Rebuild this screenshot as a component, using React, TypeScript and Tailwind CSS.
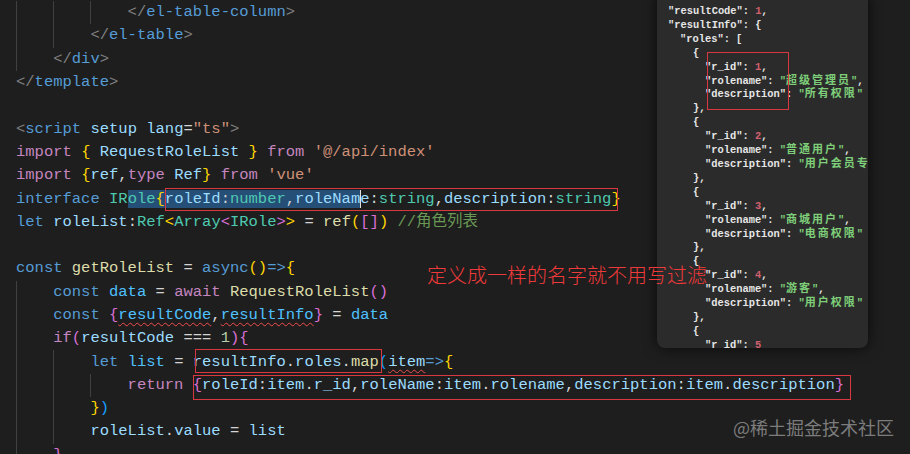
import React from "react";

const MONO = "font-['Liberation_Mono','Noto_Sans_CJK_SC',monospace]";

const C = {
  punct: "text-[#808080]",
  tag: "text-[#569cd6]",
  kw: "text-[#569cd6]",
  attr: "text-[#9cdcfe]",
  str: "text-[#ce9178]",
  ctrl: "text-[#c586c0]",
  v: "text-[#9cdcfe]",
  cv: "text-[#4fc1ff]",
  type: "text-[#4ec9b0]",
  fn: "text-[#dcdcaa]",
  num: "text-[#b5cea8]",
  cmt: "text-[#6a9955]",
  gold: "text-[#ffd700]",
  pur: "text-[#da70d6]",
  blue: "text-[#179fff]",
  def: "text-[#d4d4d4]",
};

const S = ({ c, children }: any) => <span className={c}>{children}</span>;

const Squig = ({ c, children }: any) => (
  <span
    className={
      c +
      " underline decoration-wavy decoration-[#f14c4c] decoration-1 underline-offset-[3px]"
    }
  >
    {children}
  </span>
);

const Box = ({ cls, children }: any) => (
  <span className="relative inline-block">
    {children}
    <span
      className={
        "pointer-events-none absolute border border-[#d8383f] " + cls
      }
    />
  </span>
);

function Line({ indent = 0, children }: any) {
  return (
    <div className="flex h-[23.3px] items-center whitespace-pre">
      {Array.from({ length: indent }).map((_, i) => (
        <span
          key={i}
          className="w-[4ch] shrink-0 self-stretch border-l border-[#404040]"
        />
      ))}
      <span className="leading-[17px]">{children}</span>
    </div>
  );
}

const Sel = ({ c, children }: any) => (
  <span className={c + " bg-[#264f78]"}>{children}</span>
);

function Code() {
  return (
    <div className={`pl-4 pt-[1px] text-[15.5px] ${MONO}`}>
      <Line indent={3}>
        <S c={C.punct}>{"</"}</S>
        <S c={C.tag}>el-table-column</S>
        <S c={C.punct}>{">"}</S>
      </Line>
      <Line indent={2}>
        <S c={C.punct}>{"</"}</S>
        <S c={C.tag}>el-table</S>
        <S c={C.punct}>{">"}</S>
      </Line>
      <Line indent={1}>
        <S c={C.punct}>{"</"}</S>
        <S c={C.tag}>div</S>
        <S c={C.punct}>{">"}</S>
      </Line>
      <Line>
        <S c={C.punct}>{"</"}</S>
        <S c={C.tag}>template</S>
        <S c={C.punct}>{">"}</S>
      </Line>
      <Line> </Line>
      <Line>
        <S c={C.punct}>{"<"}</S>
        <S c={C.tag}>script</S>
        <S c={C.attr}> setup lang</S>
        <S c={C.def}>=</S>
        <S c={C.str}>"ts"</S>
        <S c={C.punct}>{">"}</S>
      </Line>
      <Line>
        <S c={C.ctrl}>import </S>
        <S c={C.gold}>{"{"}</S>
        <S c={C.v}> RequestRoleList </S>
        <S c={C.gold}>{"}"}</S>
        <S c={C.ctrl}> from </S>
        <S c={C.str}>'@/api/index'</S>
      </Line>
      <Line>
        <S c={C.ctrl}>import </S>
        <S c={C.gold}>{"{"}</S>
        <S c={C.v}>ref</S>
        <S c={C.def}>,</S>
        <S c={C.ctrl}>type </S>
        <S c={C.v}>Ref</S>
        <S c={C.gold}>{"}"}</S>
        <S c={C.ctrl}> from </S>
        <S c={C.str}>'vue'</S>
      </Line>
      <Line>
        <S c={C.kw}>interface </S>
        <S c={C.type}>IR</S>
        <Sel c={C.type}>ole</Sel>
        <Sel c={C.gold}>{"{"}</Sel>
        <Box cls="left-0 right-[-7px] top-[-3px] bottom-[-3px]">
          <Sel c={C.v}>roleId</Sel>
          <Sel c={C.def}>:</Sel>
          <Sel c={C.type}>number</Sel>
          <Sel c={C.def}>,</Sel>
          <Sel c={C.v}>roleNam</Sel>
          <span className={C.v + " shadow-[inset_1px_0_0_#e0e0e0]"}>e</span>
          <S c={C.def}>:</S>
          <S c={C.type}>string</S>
          <S c={C.def}>,</S>
          <S c={C.v}>description</S>
          <S c={C.def}>:</S>
          <S c={C.type}>string</S>
        </Box>
        <S c={C.gold}>{"}"}</S>
      </Line>
      <Line>
        <S c={C.kw}>let </S>
        <S c={C.v}>roleList</S>
        <S c={C.def}>:</S>
        <S c={C.type}>Ref</S>
        <S c={C.gold}>{"<"}</S>
        <S c={C.type}>Array</S>
        <S c={C.pur}>{"<"}</S>
        <S c={C.type}>IRole</S>
        <S c={C.pur}>{">"}</S>
        <S c={C.gold}>{">"}</S>
        <S c={C.def}> = </S>
        <S c={C.fn}>ref</S>
        <S c={C.gold}>(</S>
        <S c={C.pur}>[]</S>
        <S c={C.gold}>)</S>
        <S c={C.cmt}> //角色列表</S>
      </Line>
      <Line> </Line>
      <Line>
        <S c={C.kw}>const </S>
        <S c={C.fn}>getRoleList</S>
        <S c={C.def}> = </S>
        <S c={C.kw}>async</S>
        <S c={C.gold}>()</S>
        <S c={C.kw}>{"=>"}</S>
        <S c={C.gold}>{"{"}</S>
      </Line>
      <Line indent={1}>
        <S c={C.kw}>const </S>
        <S c={C.cv}>data</S>
        <S c={C.def}> = </S>
        <S c={C.ctrl}>await </S>
        <S c={C.fn}>RequestRoleList</S>
        <S c={C.pur}>()</S>
      </Line>
      <Line indent={1}>
        <S c={C.kw}>const </S>
        <S c={C.pur}>{"{"}</S>
        <Squig c={C.cv}>resultCode</Squig>
        <S c={C.def}>,</S>
        <Squig c={C.cv}>resultInfo</Squig>
        <S c={C.pur}>{"}"}</S>
        <S c={C.def}> = </S>
        <S c={C.cv}>data</S>
      </Line>
      <Line indent={1}>
        <S c={C.ctrl}>if</S>
        <S c={C.pur}>(</S>
        <S c={C.v}>resultCode</S>
        <S c={C.def}> === </S>
        <S c={C.num}>1</S>
        <S c={C.pur}>)</S>
        <S c={C.pur}>{"{"}</S>
      </Line>
      <Line indent={2}>
        <S c={C.kw}>let </S>
        <S c={C.cv}>list</S>
        <S c={C.def}> = </S>
        <Box cls="left-[2px] right-[-3px] top-[-5px] bottom-[-2px]">
          <S c={C.v}>resultInfo</S>
          <S c={C.def}>.</S>
          <S c={C.v}>roles</S>
          <S c={C.def}>.</S>
          <S c={C.fn}>map</S>
        </Box>
        <S c={C.blue}>(</S>
        <Squig c={C.v}>item</Squig>
        <S c={C.kw}>{"=>"}</S>
        <S c={C.gold}>{"{"}</S>
      </Line>
      <Line indent={3}>
        <S c={C.ctrl}>return </S>
        <Box cls="left-0 right-[-7px] top-[-2px] bottom-[-6px]">
          <S c={C.pur}>{"{"}</S>
          <S c={C.v}>roleId</S>
          <S c={C.def}>:</S>
          <S c={C.v}>item</S>
          <S c={C.def}>.</S>
          <S c={C.v}>r_id</S>
          <S c={C.def}>,</S>
          <S c={C.v}>roleName</S>
          <S c={C.def}>:</S>
          <S c={C.v}>item</S>
          <S c={C.def}>.</S>
          <S c={C.v}>rolename</S>
          <S c={C.def}>,</S>
          <S c={C.v}>description</S>
          <S c={C.def}>:</S>
          <S c={C.v}>item</S>
          <S c={C.def}>.</S>
          <S c={C.v}>description</S>
          <S c={C.pur}>{"}"}</S>
        </Box>
      </Line>
      <Line indent={2}>
        <S c={C.gold}>{"}"}</S>
        <S c={C.blue}>)</S>
      </Line>
      <Line indent={2}>
        <S c={C.v}>roleList</S>
        <S c={C.def}>.</S>
        <S c={C.v}>value</S>
        <S c={C.def}> = </S>
        <S c={C.v}>list</S>
      </Line>
      <Line indent={1}>
        <S c={C.pur}>{"}"}</S>
      </Line>
    </div>
  );
}

const J = {
  k: "text-[#e6e6e6]",
  n: "text-[#d0606e]",
  s: "text-[#7fcf7a]",
};

const Cn = ({ children }: any) => (
  <span className="text-[11px] tracking-[2px]">{children}</span>
);

function Role({ id, name, desc, last }: any) {
  return (
    <>
      <div className="pl-[25px]">
        <S c={J.k}>{"{"}</S>
      </div>
      <div className="pl-[37px]">
        <S c={J.k}>"r_id": </S>
        <S c={J.n}>{id}</S>
        {!last && <S c={J.k}>,</S>}
      </div>
      {!last && (
        <>
          <div className="pl-[37px]">
            <S c={J.k}>"rolename": </S>
            <S c={J.s}>
              "<Cn>{name}</Cn>"
            </S>
            <S c={J.k}>,</S>
          </div>
          <div className="pl-[37px]">
            <S c={J.k}>"description": </S>
            <S c={J.s}>
              "<Cn>{desc}</Cn>"
            </S>
          </div>
          <div className="pl-[25px]">
            <S c={J.k}>{"},"}</S>
          </div>
        </>
      )}
    </>
  );
}

function JsonPanel() {
  return (
    <div className="absolute left-[657px] top-[-8px] h-[356px] w-[211px] overflow-hidden rounded-lg bg-[#2b2b2b] shadow-[0_0_14px_rgba(0,0,0,0.7)]">
      <div
        className={`whitespace-pre pl-[11px] pt-[13px] text-[10.4px] font-bold leading-[13.9px] ${MONO}`}
      >
        <div>
          <S c={J.k}>"resultCode": </S>
          <S c={J.n}>1</S>
          <S c={J.k}>,</S>
        </div>
        <div>
          <S c={J.k}>"resultInfo": {"{"}</S>
        </div>
        <div className="pl-[12px]">
          <S c={J.k}>"roles": [</S>
        </div>
        <Role id="1" name="超级管理员" desc="所有权限" />
        <Role id="2" name="普通用户" desc="用户会员专享权限" />
        <Role id="3" name="商城用户" desc="电商权限" />
        <Role id="4" name="游客" desc="用户权限" />
        <Role id="5" last />
      </div>
      <div className="absolute left-[50px] top-[60px] h-[58px] w-[82px] border border-[#d8383f]" />
    </div>
  );
}

export default function App() {
  return (
    <div className="relative h-[454px] w-[910px] overflow-hidden bg-[#1e1e1e]">
      <Code />
      <JsonPanel />
      <div className="absolute left-[427px] top-[262px] whitespace-nowrap font-['Noto_Sans_CJK_SC',sans-serif] text-[20px] font-light leading-[26px] text-[#f03a3a]">
        定义成一样的名字就不用写过滤
      </div>
      <div className="absolute left-[733px] top-[416px] whitespace-nowrap font-['Noto_Sans_CJK_SC',sans-serif] text-[18px] leading-[22px] text-[#7c7c7c]">
        @稀土掘金技术社区
      </div>
    </div>
  );
}
